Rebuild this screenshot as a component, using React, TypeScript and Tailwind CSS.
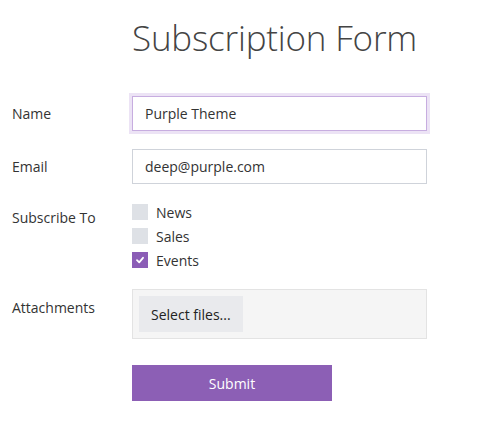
import { useState } from 'react'

const font = { fontFamily: '"Segoe UI", "Open Sans", "Noto Sans", sans-serif' }

function Check({ checked }: { checked: boolean }) {
  return (
    <span className={`w-4 h-4 shrink-0 flex items-center justify-center ${checked ? 'bg-[#8b5db6]' : 'bg-[#dee1e6]'}`}>
      {checked && (
        <svg width="10" height="10" viewBox="0 0 10 10">
          <path d="M2 5.2 L4.2 7.3 L8 2.8" fill="none" stroke="#fff" strokeWidth="1.8" strokeLinecap="round" strokeLinejoin="round" />
        </svg>
      )}
    </span>
  )
}

export default function App() {
  const [name, setName] = useState('Purple Theme')
  const [email, setEmail] = useState('deep@purple.com')
  const subs = [
    { label: 'News', checked: false },
    { label: 'Sales', checked: false },
    { label: 'Events', checked: true },
  ]

  return (
    <div className="w-[500px] h-[425px] bg-white text-[#333] text-[14px]" style={font}>
      <div className="pl-[132px] pt-[14px] h-[93px]">
        <h1 className="text-[35px] font-light text-[#444] leading-[48px] tracking-[-0.2px]">Subscription Form</h1>
      </div>

      <div className="flex items-center">
        <label className="w-[132px] pl-3">Name</label>
        <div className="p-[3px] bg-[#ece3f5] -ml-[3px]">
          <input
            value={name}
            onChange={e => setName(e.target.value)}
            className="w-[295px] h-[35px] border border-[#c7ade0] px-3 outline-none bg-white text-[#333]"
          />
        </div>
      </div>

      <div className="flex items-center mt-[15px]">
        <label className="w-[132px] pl-3">Email</label>
        <input
          value={email}
          onChange={e => setEmail(e.target.value)}
          className="w-[295px] h-[35px] border border-[#cfd3da] px-3 outline-none bg-white text-[#333]"
        />
      </div>

      <div className="flex mt-[20px]">
        <label className="w-[132px] pl-3 pt-[3px]">Subscribe To</label>
        <div className="flex flex-col gap-2">
          {subs.map(s => (
            <div key={s.label} className="flex items-center gap-2 h-4">
              <Check checked={s.checked} />
              <span>{s.label}</span>
            </div>
          ))}
        </div>
      </div>

      <div className="flex mt-[21px]">
        <label className="w-[132px] pl-3 pt-[8px]">Attachments</label>
        <div className="w-[295px] h-[50px] bg-[#f5f5f5] border border-[#e3e3e3] p-[6px]">
          <button className="h-9 px-3 bg-[#e9eaed] text-[#222]">Select files...</button>
        </div>
      </div>

      <div className="pl-[132px] mt-[26px]">
        <button className="w-[200px] h-9 bg-[#8c5fb5] text-white">Submit</button>
      </div>
    </div>
  )
}
